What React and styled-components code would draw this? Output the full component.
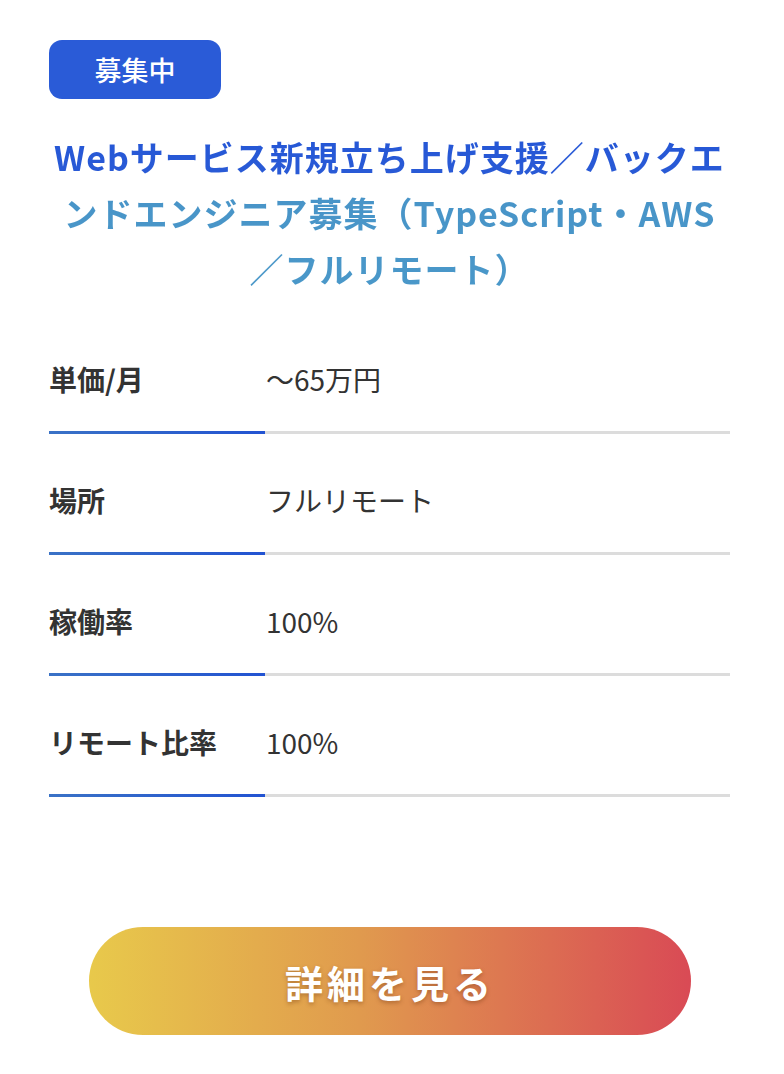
import React from "react";
import styled, { createGlobalStyle } from "styled-components";

const Global = createGlobalStyle`
  html, body { margin: 0; padding: 0; background: #fff; }
  body {
    font-family: "Noto Sans CJK JP", "Noto Sans", sans-serif;
    color: #333;
  }
`;

const Card = styled.div`
  width: 681px;
  margin-left: 49px;
  padding-top: 40px;
  padding-bottom: 39px;
`;

const Badge = styled.div`
  display: inline-flex;
  align-items: center;
  justify-content: center;
  width: 172px;
  height: 59px;
  border-radius: 13px;
  background: #2a5bd7;
  color: #fff;
  font-size: 27px;
  font-weight: 500;
`;

const Title = styled.h2`
  margin: 30px 0 0;
  text-align: center;
  font-size: 34px;
  font-weight: 700;
  line-height: 56px;
  letter-spacing: 1px;
  background: linear-gradient(
    to bottom,
    #2456d6 0%,
    #2a5bd6 31%,
    #4894c8 37%,
    #4a98c9 100%
  );
  -webkit-background-clip: text;
  background-clip: text;
  color: transparent;
`;

const Specs = styled.dl`
  display: grid;
  grid-template-columns: 216px 1fr;
  margin: 16px 0 0;
`;

const Label = styled.dt`
  padding: 48px 0 34px;
  font-size: 28px;
  line-height: 36px;
  font-weight: 700;
  color: #333;
  border-bottom: 3px solid transparent;
  border-image: linear-gradient(to right, #3a72c6, #2253d2) 1;
`;

const Value = styled.dd`
  margin: 0;
  padding: 48px 0 34px 1px;
  font-size: 28px;
  line-height: 36px;
  font-weight: 400;
  color: #333;
  border-bottom: 3px solid #dcdcdc;
`;

const ButtonWrap = styled.div`
  display: flex;
  justify-content: center;
  margin-top: 130px;
`;

const DetailButton = styled.a`
  display: flex;
  align-items: center;
  justify-content: center;
  width: 602px;
  height: 108px;
  margin-left: 1px;
  border-radius: 54px;
  background: linear-gradient(to right, #e8c94b, #e09a4e 45%, #d94a55);
  color: #fff;
  font-size: 38px;
  font-weight: 700;
  letter-spacing: 4px;
  text-decoration: none;
  text-shadow: 0 2px 4px rgba(120, 60, 20, 0.45);
`;

const specs = [
  ["単価/月", "〜65万円"],
  ["場所", "フルリモート"],
  ["稼働率", "100%"],
  ["リモート比率", "100%"],
];

export default function App() {
  return (
    <>
      <Global />
      <Card>
        <Badge>募集中</Badge>
        <Title>
          Webサービス新規立ち上げ支援／バックエンドエンジニア募集（TypeScript・AWS／フルリモート）
        </Title>
        <Specs>
          {specs.map(([k, v]) => (
            <React.Fragment key={k}>
              <Label>{k}</Label>
              <Value>{v}</Value>
            </React.Fragment>
          ))}
        </Specs>
        <ButtonWrap>
          <DetailButton href="#">詳細を見る</DetailButton>
        </ButtonWrap>
      </Card>
    </>
  );
}
